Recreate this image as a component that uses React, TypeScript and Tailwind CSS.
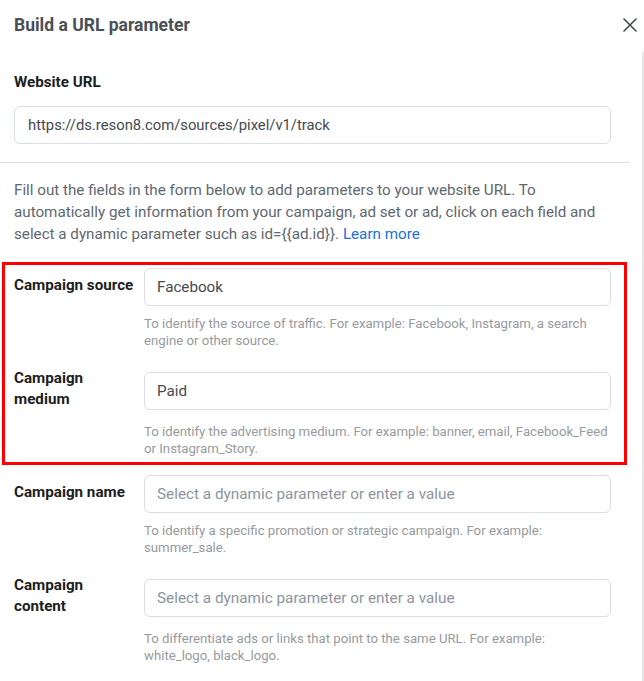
import React from "react"

type Field = {
  label: string
  value?: string
  help: string
}

const boxed: Field[] = [
  {
    label: "Campaign source",
    value: "Facebook",
    help: "To identify the source of traffic. For example: Facebook, Instagram, a search engine or other source.",
  },
  {
    label: "Campaign medium",
    value: "Paid",
    help: "To identify the advertising medium. For example: banner, email, Facebook_Feed or Instagram_Story.",
  },
]

const rest: Field[] = [
  {
    label: "Campaign name",
    help: "To identify a specific promotion or strategic campaign. For example: summer_sale.",
  },
  {
    label: "Campaign content",
    help: "To differentiate ads or links that point to the same URL. For example: white_logo, black_logo.",
  },
]

const ParamRow = ({ field }: { field: Field }) => (
  <div className="flex flex-col">
    {/* label + input, label nudged up a little */}
    <div className="flex items-center gap-[8px]">
      <div className="w-[122px] shrink-0 pb-[4px] text-[15.2px] leading-[21px] font-bold text-[#1c1e21]">
        {field.label}
      </div>
      <div className="flex h-[38px] flex-1 items-center rounded-[6px] border border-[#dadde1] bg-white pl-[12px]">
        {field.value ? (
          <span className="text-[15.2px] text-[#444950]">{field.value}</span>
        ) : (
          <span className="text-[15.3px] text-[#8d949e]">Select a dynamic parameter or enter a value</span>
        )}
      </div>
    </div>
    <p className="mt-[9px] ml-[130px] text-[13.2px] leading-[17px] text-[#979aa0]">{field.help}</p>
  </div>
)

export default function App() {
  return (
    <div className="relative h-[681px] w-[644px] overflow-hidden bg-white font-['Roboto',sans-serif]">
      {/* Header */}
      <div className="flex h-[50px] items-center justify-between pl-[14px] pr-[7px]">
        <h1 className="text-[17.5px] font-bold text-[#4b4f56]">Build a URL parameter</h1>
        <svg width="14" height="14" viewBox="0 0 14 14" className="text-[#444950]">
          <path d="M1 1L13 13M13 1L1 13" stroke="currentColor" strokeWidth="1.6" strokeLinecap="round" />
        </svg>
      </div>

      <div className="mt-[2px] flex">
        {/* Scrollable content */}
        <div className="w-[629px] shrink-0">
          <div className="pl-[14px] pr-[18px] pt-[20px] pb-[18px]">
            <div className="text-[15.2px] leading-[20px] font-bold text-[#1c1e21]">Website URL</div>
            <div className="mt-[14px] flex h-[38px] items-center rounded-[6px] border border-[#dadde1] pl-[13px]">
              <span className="text-[14.8px] text-[#444950]">https://ds.reson8.com/sources/pixel/v1/track</span>
            </div>
          </div>

          <div className="border-t border-[#dadde1]" />

          <p className="pl-[14px] pr-[18px] pt-[16px] text-[15.2px] leading-[22px] text-[#606770]">
            Fill out the fields in the form below to add parameters to your website URL. To automatically get
            information from your campaign, ad set or ad, click on each field and select a dynamic parameter such as
            id={"{{ad.id}}"}. <span className="text-[#216fdb]">Learn more</span>
          </p>

          {/* Highlighted rows */}
          <div className="mt-[17px] ml-[2px] w-[625px] border-[3px] border-[#ff0000] pl-[9px] pr-[13px] pt-[3px] pb-[5px]">
            <div className="flex flex-col gap-[19px]">
              {boxed.map((f) => (
                <ParamRow key={f.label} field={f} />
              ))}
            </div>
          </div>

          <div className="mt-[10px] flex flex-col gap-[19px] pl-[14px] pr-[18px]">
            {rest.map((f) => (
              <ParamRow key={f.label} field={f} />
            ))}
          </div>
        </div>

        {/* Scroll track */}
        <div className="ml-auto h-[640px] w-[2px] bg-[#e4e6e8]" />
      </div>
    </div>
  )
}
